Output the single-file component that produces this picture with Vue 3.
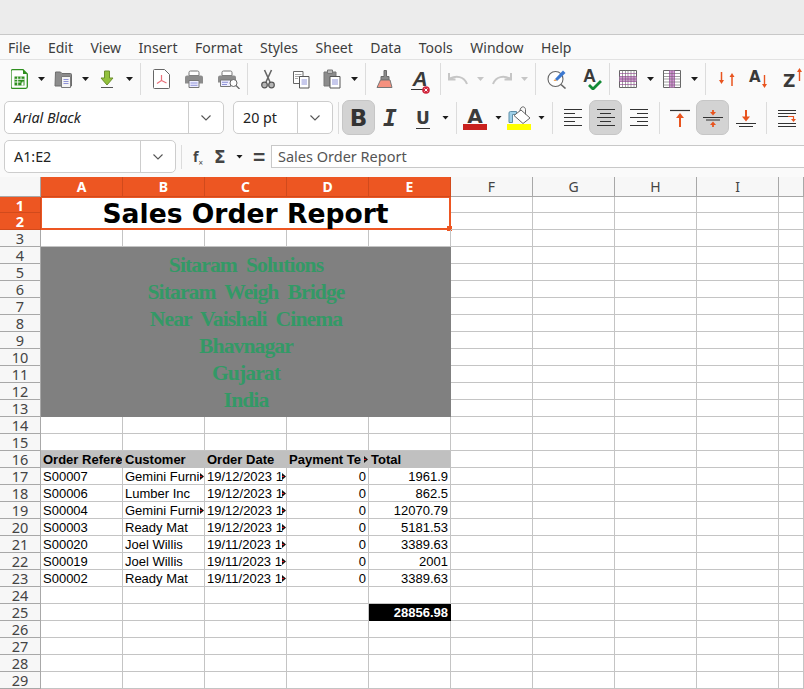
<template>
  <div class="app">
    <div class="titlebar"></div>
    <div class="menubar">
      <span v-for="m in menus" :key="m">{{ m }}</span>
    </div>

    <div class="toolbar tb1">
      <!-- new spreadsheet -->
      <svg class="ic w17" viewBox="0 0 17 20"><path d="M1.500.700h10.500l4.300 4.300v12.800a1.500 1.500 0 0 1-1.500 1.500h-13.300a1.500 1.500 0 0 1-1.500-1.500v-15.600a1.500 1.500 0 0 1 1.500-1.500z" fill="#fff" stroke="#2f8f1f" stroke-width="1.300"/><path d="M12 .700l4.300 4.300h-4.300z" fill="#2f8f1f"/><path d="M3.500 7.500h10v9h-10z" fill="#2f8f1f"/><path d="M3.500 10.300h10M3.500 13h6M6.700 7.500v9M10 7.500v3" stroke="#fff" stroke-width=".9"/><path d="M10.500 16.500v-3h1v-1h1v4z" fill="#fff"/></svg>
      <i class="drop ml10"></i>
      <!-- open -->
      <svg class="ic w18 ml9" viewBox="0 0 18 20"><path d="M1.500 3h5l1.500 1.500h8.500a1 1 0 0 1 1 1v11.500h-16.500z" fill="#8c8c8c" stroke="#6d6d6d"/><path d="M7.500 7.500h9v11h-9z" fill="#f4f4f4" stroke="#7a7a7a"/><path d="M9.500 10.500h5M9.500 12.500h5M9.500 14.500h5" stroke="#8f93d8"/></svg>
      <i class="drop ml10"></i>
      <!-- save -->
      <svg class="ic w18 ml9" viewBox="0 0 18 20"><path d="M6.500 2h5v7h3.500l-6 7-6-7h3.500z" fill="#92c13c" stroke="#6c8f2c"/><path d="M3 18.500h12" stroke="#555" stroke-width="1"/></svg>
      <i class="drop ml10"></i>
      <b class="sep ml7"></b>
      <!-- pdf -->
      <svg class="ic w17 ml12" viewBox="0 0 17 20"><path d="M1.500.500h10l5 5v13a1 1 0 0 1-1 1h-14a1 1 0 0 1-1-1v-17a1 1 0 0 1 1-1z" fill="#fff" stroke="#666"/><path d="M8.500 6v5.500l-4.500 3M8.500 11.500l5 2.500" stroke="#e8707a" stroke-width="1.200" fill="none"/></svg>
      <!-- print -->
      <svg class="ic w18 ml15" viewBox="0 0 18 20"><path d="M4 6.500v-3a1.500 1.500 0 0 1 1.500-1.500h7a1.500 1.500 0 0 1 1.500 1.500v3z" fill="#fff" stroke="#777"/><path d="M2 6.500h14a2 2 0 0 1 2 2v6h-18v-6a2 2 0 0 1 2-2z" fill="#8c8c8c"/><path d="M4 11.500h10v7h-10z" fill="#eef" stroke="#777"/><path d="M5.500 14h7M5.500 16.300h7" stroke="#8f93d8"/></svg>
      <!-- preview -->
      <svg class="ic w22 ml15" viewBox="0 0 22 20"><path d="M4 6.500v-3a1.500 1.500 0 0 1 1.500-1.500h7a1.500 1.500 0 0 1 1.500 1.500v3z" fill="#fff" stroke="#777"/><path d="M2 6.500h14a2 2 0 0 1 2 2v5h-18v-5a2 2 0 0 1 2-2z" fill="#8c8c8c"/><path d="M2.500 11h10v6.500h-10z" fill="#eef" stroke="#777"/><path d="M4 13.300h6M4 15.500h5" stroke="#8f93d8"/><circle cx="15.500" cy="14" r="3.500" fill="#fff" stroke="#666"/><path d="M18 16.500l3.500 3.500" stroke="#666" stroke-width="1.200"/></svg>
      <b class="sep ml7"></b>
      <!-- cut -->
      <svg class="ic w18 ml11" viewBox="0 0 18 20"><path d="M5.500 1l5.500 12M12.500 1l-5.500 12" stroke="#666" stroke-width="1.600" fill="none"/><circle cx="5.500" cy="16" r="2.800" fill="#b5b5b5" stroke="#555" stroke-width="1.200"/><circle cx="12.500" cy="16" r="2.800" fill="#b5b5b5" stroke="#555" stroke-width="1.200"/></svg>
      <!-- copy -->
      <svg class="ic w18 ml15" viewBox="0 0 18 20"><path d="M1.500 2.500h9.500v12h-9.500z" fill="#fff" stroke="#666" stroke-linejoin="round"/><path d="M3 5.500h6.500M3 7.500h6.500M3 9.500h3" stroke="#aaa"/><path d="M7.500 7.500h9.500v11.500h-9.500z" fill="#fff" stroke="#555" stroke-linejoin="round"/><path d="M9.500 11h5.500M9.500 13h5.500M9.500 15h5.500" stroke="#8f93d8"/></svg>
      <!-- paste -->
      <svg class="ic w18 ml13" viewBox="0 0 18 20"><path d="M1 3h12v14h-12z" fill="#8c8c8c" stroke="#777" stroke-linejoin="round"/><path d="M4.500 1h5v3.500h-5z" fill="#bbb" stroke="#777"/><path d="M7 7.500h10v11.500h-10z" fill="#fff" stroke="#555" stroke-linejoin="round"/><path d="M9 11h6M9 13h6M9 15h6" stroke="#8f93d8"/></svg>
      <i class="drop ml10"></i>
      <b class="sep ml7"></b>
      <!-- clone formatting -->
      <svg class="ic w18 ml10" viewBox="0 0 18 20"><path d="M8 1.500h2.500v6h2.500v3.500h-8v-3.500h3z" fill="#8a8a8a" stroke="#6a6a6a"/><path d="M4.500 11h9.500l2 7.500h-15z" fill="#f5917f" stroke="#777"/></svg>
      <!-- clear formatting -->
      <span class="clear-a ml17">A<svg viewBox="0 0 8 8"><circle cx="4" cy="4" r="3.800" fill="#d0263c"/><path d="M2.500 2.500l3 3M5.500 2.500l-3 3" stroke="#fff"/></svg></span>
      <b class="sep ml11"></b>
      <!-- undo / redo -->
      <svg class="ic w21 ml6" viewBox="0 0 21 20"><path d="M20 15C17 7 9 6.500 3 9.500M2 4v6.500h6.500" fill="none" stroke="#c6c6c6" stroke-width="2"/></svg>
      <i class="drop off ml9"></i>
      <svg class="ic w21 ml8" viewBox="0 0 21 20"><path d="M1 15C4 7 12 6.500 18 9.500M19 4v6.500h-6.500" fill="none" stroke="#c6c6c6" stroke-width="2"/></svg>
      <i class="drop off ml8"></i>
      <b class="sep ml7"></b>
      <!-- find -->
      <svg class="ic w20 ml11" viewBox="0 0 20 20"><circle cx="8.500" cy="10" r="7.500" fill="#fff" stroke="#666" stroke-width="1.100"/><path d="M14 15.500l4.500 4" stroke="#666" stroke-width="1.600"/><path d="M8 10l8-8.500 2.500 2.500-8.500 8z" fill="#3b78d0"/><path d="M6.500 12l1.500-2 2 2z" fill="#e9a45c"/></svg>
      <!-- spelling -->
      <span class="spell ml16">A<svg viewBox="0 0 14 10"><path d="M1 5l4 4 8-8" fill="none" stroke="#128a35" stroke-width="2.800"/></svg></span>
      <b class="sep ml8"></b>
      <!-- grid rows / cols -->
      <svg class="ic w18 ml9" viewBox="0 0 18 18"><path d="M.5.500h17v17H.5z" fill="#fff" stroke="#666"/><path d="M.5 6.500h17v5H.5z" fill="#cf9bd0"/><path d="M3.500.5v17M6.500.5v17M9 .5v17M12 .5v17M15 .5v17" stroke="#777" stroke-width=".7"/><path d="M.5 3.500h17M.5 6.500h17M.5 9h17M.5 11.500h17M.5 14.500h17" stroke="#8a3a8a" stroke-width=".6"/></svg>
      <i class="drop ml10"></i>
      <svg class="ic w18 ml9" viewBox="0 0 18 18"><path d="M.5.500h17v17H.5z" fill="#fff" stroke="#666"/><path d="M6.500.500h5v17h-5z" fill="#cf9bd0"/><path d="M.5 3.500h17M.5 6.500h17M.5 9h17M.5 12h17M.5 15h17" stroke="#777" stroke-width=".7"/><path d="M6.500.500v17M11.500.500v17M9 .5v17" stroke="#8a3a8a" stroke-width=".6"/></svg>
      <i class="drop ml10"></i>
      <b class="sep ml7"></b>
      <!-- sort -->
      <svg class="ic w18 ml12" viewBox="0 0 18 20"><path d="M3.500 3v10" stroke="#e8541f" stroke-width="1.500"/><path d="M1 11h5l-2.500 4zM11.500 8h5l-2.500-4z" fill="#e8541f"/><path d="M14 7v10" stroke="#e8541f" stroke-width="1.500"/></svg>
      <span class="sort-a ml13">A<svg viewBox="0 0 7 14"><path d="M3.500 0v10" stroke="#e8541f" stroke-width="1.400"/><path d="M1 9h5l-2.500 4z" fill="#e8541f"/></svg></span>
      <span class="sort-z ml14">Z<svg viewBox="0 0 7 14"><path d="M3.500 14v-10" stroke="#e8541f" stroke-width="1.400"/><path d="M1 5h5l-2.500-4z" fill="#e8541f"/></svg></span>
    </div>

    <div class="toolbar tb2">
      <div class="combo font-box"><em>Arial Black</em><span class="chev"><svg viewBox="0 0 12 8"><path d="M1.500 1.500L6 6l4.500-4.500" fill="none" stroke="#555" stroke-width="1.100"/></svg></span></div>
      <div class="combo size-box ml9"><span class="val">20 pt</span><span class="chev"><svg viewBox="0 0 12 8"><path d="M1.500 1.500L6 6l4.500-4.500" fill="none" stroke="#555" stroke-width="1.100"/></svg></span></div>
      <b class="sep ml5"></b>
      <div class="btn on bold ml3">B</div>
      <div class="ital ml5">I</div>
      <div class="under ml16">U</div>
      <i class="drop ml12"></i>
      <b class="sep ml7"></b>
      <div class="font-color ml6">A<u></u></div>
      <i class="drop ml8"></i>
      <div class="fill ml5"><svg viewBox="0 0 24 18"><path d="M2 7a1.500 1.500 0 0 1 1.500-1.500h6v3h-4v8h-3.500z" fill="#9fd0e8" stroke="#5f8fa8"/><path d="M14 4l9 8-7 5.500-9-8z" fill="#fff" stroke="#666"/><path d="M13 5c0-5 5-5.500 5.500-1.500v5" fill="none" stroke="#666"/></svg><u></u></div>
      <i class="drop ml7"></i>
      <b class="sep ml7"></b>
      <div class="lines left ml11"><i v-for="(w, i) in lineWidths" :key="i" :style="{ width: w + 'px' }"></i></div>
      <div class="btn on lines center ml7"><i v-for="(w, i) in lineWidths" :key="i" :style="{ width: w + 'px' }"></i></div>
      <div class="lines right ml8"><i v-for="(w, i) in lineWidths" :key="i" :style="{ width: w + 'px' }"></i></div>
      <b class="sep ml11"></b>
      <svg class="va ml10" viewBox="0 0 20 20"><path d="M0 2.500h20" stroke="#333" stroke-width="1.200"/><path d="M10 19V8" stroke="#e8541f" stroke-width="2"/><path d="M6 10l4-5 4 5z" fill="#e8541f"/></svg>
      <div class="btn on ml6"><svg class="va" viewBox="0 0 20 20"><path d="M0 9.500h20M3 12h14" stroke="#333" stroke-width="1.200"/><path d="M10 2v4M10 15v4" stroke="#e8541f" stroke-width="1.800"/><path d="M7 4l3 3.500 3-3.500zM7 17l3-3.500 3 3.500z" fill="#e8541f"/></svg></div>
      <svg class="va ml7" viewBox="0 0 20 20"><path d="M0 15.500h20M3 18.500h14" stroke="#333" stroke-width="1.200"/><path d="M10 2v8" stroke="#e8541f" stroke-width="2"/><path d="M6 8.500l4 5 4-5z" fill="#e8541f"/></svg>
      <b class="sep ml10"></b>
      <svg class="wrap ml11" viewBox="0 0 18 20"><path d="M0 2.500h18M0 5.500h18M0 8.500h10M0 15.500h18M0 18.500h18" stroke="#333"/><path d="M10 8.500h5.500v3" fill="none" stroke="#e8541f" stroke-width="1.200"/><path d="M13 11h5l-2.500 3z" fill="#e8541f"/></svg>
    </div>

    <div class="formulabar">
      <div class="combo name-box"><span class="val">A1:E2</span><span class="chev"><svg viewBox="0 0 12 8"><path d="M1.500 1.500L6 6l4.500-4.500" fill="none" stroke="#555" stroke-width="1.100"/></svg></span></div>
      <b class="sep short ml5"></b>
      <span class="fx ml11">f<sub>×</sub></span>
      <span class="sigma ml10">Σ</span>
      <i class="drop ml10"></i>
      <span class="eq ml10">=</span>
      <div class="input">Sales Order Report</div>
    </div>

    <div class="sheet">
      <div class="corner"></div>
      <div v-for="(c, i) in cols" :key="i" class="colhead" :class="{ sel: i < 5 }">{{ c }}</div>

      <template v-for="r in rows" :key="r.n">
        <div class="rowhead" :class="{ sel: r.n < 3 }">{{ r.n }}</div>
        <div v-if="r.n === 1" class="title-cell">Sales Order Report<i class="handle"></i></div>
        <div v-if="r.n === 4" class="company">
          <div v-for="l in company" :key="l">{{ l }}</div>
        </div>
        <div
          v-for="(c, i) in r.cells"
          :key="i"
          class="cell"
          :class="[c.cls]"
        >{{ c.text }}<i v-if="c.clip" class="clip"></i></div>
      </template>
    </div>
  </div>
</template>

<script setup>
const menus = ['File', 'Edit', 'View', 'Insert', 'Format', 'Styles', 'Sheet', 'Data', 'Tools', 'Window', 'Help']
const cols = ['A', 'B', 'C', 'D', 'E', 'F', 'G', 'H', 'I', '']
const company = ['Sitaram  Solutions', 'Sitaram  Weigh  Bridge', 'Near  Vaishali  Cinema', 'Bhavnagar', 'Gujarat', 'India']
const lineWidths = [18, 11, 18, 11, 18]

const orders = [
  ['S00007', 'Gemini Furni', '19/12/2023 1', 0, '1961.9'],
  ['S00006', 'Lumber Inc', '19/12/2023 1', 0, '862.5'],
  ['S00004', 'Gemini Furni', '19/12/2023 1', 0, '12070.79'],
  ['S00003', 'Ready Mat', '19/12/2023 1', 0, '5181.53'],
  ['S00020', 'Joel Willis', '19/11/2023 1', 0, '3389.63'],
  ['S00019', 'Joel Willis', '19/11/2023 1', 0, '2001'],
  ['S00002', 'Ready Mat', '19/11/2023 1', 0, '3389.63']
]

// merged blocks (A1:E2, A4:E13) take the first five columns of their rows
const blank = (n = 10) => Array.from({ length: n }, () => ({ text: '', cls: '' }))

function rowCells(n) {
  if (n < 3 || (n >= 4 && n <= 13)) return blank(5)
  if (n === 16) {
    const heads = ['Order Refere', 'Customer', 'Order Date', 'Payment Te', 'Total']
    return [
      ...heads.map((t) => ({ text: t, cls: 'head', clip: t === 'Order Refere' || t === 'Payment Te' })),
      ...blank(5)
    ]
  }
  if (n >= 17 && n <= 23) {
    const o = orders[n - 17]
    return [
      { text: o[0], cls: 'txt' },
      { text: o[1], cls: 'txt', clip: o[1].startsWith('Gemini') },
      { text: o[2], cls: 'txt', clip: true },
      { text: o[3], cls: 'num' },
      { text: o[4], cls: 'num' },
      ...blank(5)
    ]
  }
  if (n === 25) {
    const c = blank()
    c[4] = { text: '28856.98', cls: 'grand' }
    return c
  }
  return blank()
}

const rows = Array.from({ length: 29 }, (_, i) => ({ n: i + 1, cells: rowCells(i + 1) }))
</script>

<style>
html, body { margin: 0; overflow: hidden; background: #fff; }
</style>

<style scoped>
.app {
  width: 804px;
  height: 689px;
  overflow: hidden;
  display: flex;
  flex-direction: column;
  font-family: "Noto Sans", "Open Sans", sans-serif;
  background: #fafafa;
}
.titlebar { height: 34px; background: #ececec; border-bottom: 1px solid #c8c8c8; flex: none; }
.menubar {
  height: 24px;
  flex: none;
  display: flex;
  align-items: center;
  gap: 17.500px;
  padding-left: 8px;
  font-size: 14px;
  color: #3d3d3d;
  border-bottom: 1px solid #e2e2e2;
}

.toolbar { display: flex; align-items: center; flex: none; white-space: nowrap; box-sizing: border-box; }
.tb1 { height: 38px; padding-left: 11px; }
.tb2 { height: 40px; padding-left: 4px; padding-bottom: 1px; }
.ml3 { margin-left: 3px; }
.ml5 { margin-left: 5px; }
.ml6 { margin-left: 6px; }
.ml7 { margin-left: 7px; }
.ml8 { margin-left: 8px; }
.ml9 { margin-left: 9px; }
.ml10 { margin-left: 10px; }
.ml11 { margin-left: 11px; }
.ml12 { margin-left: 12px; }
.ml13 { margin-left: 13px; }
.ml14 { margin-left: 14px; }
.ml15 { margin-left: 15px; }
.ml16 { margin-left: 16px; }
.ml17 { margin-left: 17px; }

.ic { height: 20px; flex: none; }
.w17 { width: 17px; }
.w18 { width: 18px; }
.w20 { width: 20px; }
.w21 { width: 21px; }
.w22 { width: 22px; }
.drop {
  display: block;
  flex: none;
  width: 7px;
  height: 4px;
  background: #1c1c1c;
  clip-path: polygon(0 0, 100% 0, 50% 100%);
}
.drop.off { background: #c6c6c6; }
.sep { display: block; flex: none; width: 1px; height: 32px; background: #dcdcdc; }
.sep.short { height: 24px; }

.clear-a {
  position: relative;
  flex: none;
  width: 18px;
  box-sizing: border-box;
  text-align: center;
  font: italic 700 21px/20px "Liberation Sans", sans-serif;
  color: #3a3a3a;
  border-bottom: 1px solid #333;
}
.clear-a svg { position: absolute; right: -1px; bottom: -5px; width: 8px; height: 8px; }
.spell {
  position: relative;
  flex: none;
  width: 18px;
  height: 22px;
  font: 700 18px/16px "Liberation Sans", sans-serif;
  color: #3a3a3a;
  text-align: left;
}
.spell svg { position: absolute; left: 5px; top: 12px; width: 14px; height: 10px; }
.sort-a, .sort-z {
  display: flex;
  flex: none;
  font: 700 15px/16px "DejaVu Sans", sans-serif;
  color: #3a3a3a;
}
.sort-a { width: 20px; height: 20px; }
.sort-a svg { width: 7px; height: 14px; margin-top: 6px; }
.sort-z { width: 21px; height: 20px; font-size: 17px; line-height: 20px; margin-top: 4px; }
.sort-z svg { width: 7px; height: 14px; margin-top: -4px; margin-left: 1px; }

.combo {
  display: flex;
  align-items: stretch;
  height: 33px;
  flex: none;
  box-sizing: border-box;
  background: #fff;
  border: 1px solid #cdcdcd;
  border-radius: 5px;
  font-size: 14.300px;
  color: #222;
}
.combo em, .combo .val { flex: 1; display: flex; align-items: center; padding-left: 9px; }
.chev { width: 34px; flex: none; border-left: 1px solid #cdcdcd; display: flex; align-items: center; justify-content: center; }
.chev svg { width: 12px; height: 8px; }
.font-box { width: 220px; }
.size-box { width: 100px; }
.name-box { width: 172px; }

.btn {
  flex: none;
  width: 33px;
  height: 35px;
  display: flex;
  align-items: center;
  justify-content: center;
  box-sizing: border-box;
}
.on { background: #d3d3d3; border: 1px solid #c6c6c6; border-radius: 7px; }
.bold { font: 700 23px "DejaVu Sans", sans-serif; color: #333; }
.ital { flex: none; width: 20px; text-align: center; font: italic 700 23px/26px "DejaVu Sans Mono", monospace; color: #3c3c3c; }
.under {
  flex: none;
  width: 14px;
  text-align: center;
  font: 700 17px/19px "DejaVu Sans", sans-serif;
  color: #3c3c3c;
  border-bottom: 1px solid #333;
  margin-top: 2px;
}
.font-color {
  flex: none;
  width: 24px;
  margin-top: 2px;
  text-align: center;
  font: 700 20px/18px "DejaVu Sans", sans-serif;
  color: #3c3c3c;
}
.font-color u { display: block; height: 6px; margin-top: -1px; background: #c9211e; }
.fill { flex: none; width: 24px; }
.fill svg { display: block; width: 24px; height: 18px; }
.fill u { display: block; height: 6px; background: #ffff00; }

.lines {
  flex: none;
  width: 18px;
  height: 35px;
  box-sizing: border-box;
  display: flex;
  flex-direction: column;
  justify-content: center;
  gap: 3px;
}
.lines i { display: block; height: 1px; background: #333; }
.lines.center { width: 33px; align-items: center; }
.lines.right { align-items: flex-end; }
.va { flex: none; width: 20px; height: 20px; }
.wrap { flex: none; width: 18px; height: 20px; }

.formulabar {
  height: 39px;
  flex: none;
  box-sizing: border-box;
  display: flex;
  align-items: center;
  padding-left: 4px;
  padding-bottom: 2px;
}
.fx { flex: none; width: 11px; font: 700 14px/16px "Noto Sans", sans-serif; color: #444; }
.fx sub { font-size: 8px; font-weight: 400; line-height: 0; }
.sigma { flex: none; width: 12px; font: 700 17px "DejaVu Sans", sans-serif; color: #444; }
.eq { flex: none; width: 12px; font: 700 21px/20px "Liberation Sans", sans-serif; color: #444; }
.input {
  flex: 1;
  height: 23px;
  box-sizing: border-box;
  margin-left: 6px;
  padding-left: 6px;
  background: #fff;
  border: 1px solid #c8c8c8;
  border-right: 0;
  line-height: 20px;
  font-size: 14.500px;
  color: #555;
}

.sheet {
  flex: none;
  display: grid;
  grid-template-columns: 41px repeat(9, 82px) 25px;
  grid-template-rows: 20px 16px 17px repeat(27, 17px);
  background: #fff;
  height: 512px;
  align-content: start;
}
.corner, .colhead, .rowhead {
  box-sizing: border-box;
  background: #f7f7f7;
  color: #444;
  border-right: 1px solid #a8a8a8;
  border-bottom: 1px solid #a8a8a8;
}
.colhead { font-size: 14px; line-height: 20px; text-align: center; }
.rowhead { font-size: 14.500px; line-height: 17px; text-align: center; }
.colhead.sel, .rowhead.sel {
  background: #ed5622;
  color: #fff;
  font-weight: 700;
  border-color: #d14a1c;
}
.cell {
  box-sizing: border-box;
  position: relative;
  border-right: 1px solid #c4c4c4;
  border-bottom: 1px solid #c4c4c4;
  font: 13px/17px "Liberation Sans", Arial, sans-serif;
  color: #000;
  white-space: nowrap;
  overflow: hidden;
}
.txt { padding-left: 2px; }
.num { text-align: right; padding-right: 2px; }
.head { padding-left: 2px; font-weight: 700; background: #c0c0c0; border-color: #c0c0c0; }
.grand { text-align: right; padding-right: 2px; font-weight: 700; color: #fff; background: #000; border-color: #000; }
.clip {
  position: absolute;
  right: 0;
  top: 5px;
  width: 4px;
  height: 7px;
  background: #111;
  clip-path: polygon(0 0, 100% 50%, 0 100%);
}
.clip::after {
  content: '';
  position: absolute;
  left: 0;
  top: 3px;
  width: 2px;
  height: 1px;
  background: #e0101a;
}
.title-cell {
  grid-column: span 5;
  grid-row: span 2;
  position: relative;
  box-sizing: border-box;
  border: 2px solid #ed5622;
  border-top-width: 1px;
  border-left-width: 1px;
  background: #fff;
  text-align: center;
  font: 700 26.600px/31px "DejaVu Sans", sans-serif;
  color: #000;
}
.handle {
  position: absolute;
  right: -3px;
  bottom: -3px;
  width: 5px;
  height: 5px;
  background: #ed5622;
}
.company {
  grid-column: span 5;
  grid-row: span 10;
  box-sizing: border-box;
  padding-top: 5px;
  background: #808080;
  color: #339966;
  text-align: center;
  font: 700 21.500px/27px "Liberation Serif", serif;
  letter-spacing: -.85px;
  white-space: pre;
  overflow: hidden;
}
</style>
